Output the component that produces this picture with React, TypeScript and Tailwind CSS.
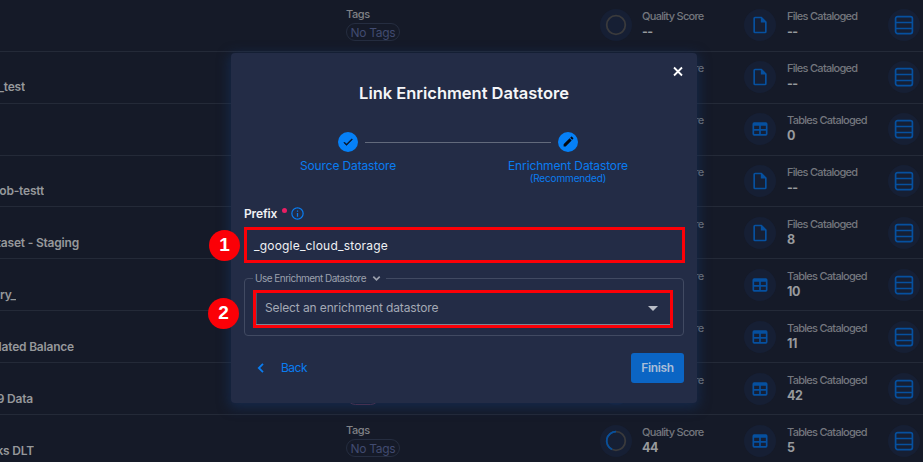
import React from "react";

type Kind = "file" | "table";
type Row = { name: string; nameWidth: string; kind: Kind; value: string; score: string; tag: "none" | "red"; box: string };

const rows: Row[] = [
  { name: "", nameWidth: "w-0", kind: "file", value: "--", score: "--", tag: "none", box: "h-[52px]" },
  { name: "_test", nameWidth: "w-[25px]", kind: "file", value: "--", score: "--", tag: "none", box: "h-[52px]" },
  { name: "", nameWidth: "w-0", kind: "table", value: "0", score: "--", tag: "none", box: "h-[52px]" },
  { name: "ob-testt", nameWidth: "w-[44px]", kind: "file", value: "--", score: "--", tag: "none", box: "h-[51px]" },
  { name: "taset - Staging", nameWidth: "w-[79px]", kind: "file", value: "8", score: "--", tag: "none", box: "h-[52px] pt-px" },
  { name: "ry_", nameWidth: "w-[16px]", kind: "table", value: "10", score: "--", tag: "none", box: "h-[52px] pt-px" },
  { name: "lated Balance", nameWidth: "w-[74px]", kind: "table", value: "11", score: "--", tag: "none", box: "h-[52px] pt-px" },
  { name: "9 Data", nameWidth: "w-[33px]", kind: "table", value: "42", score: "--", tag: "red", box: "h-[52px] pt-px" },
  { name: "ks DLT", nameWidth: "w-[34px]", kind: "table", value: "5", score: "44", tag: "none", box: "h-[52px] pt-px" },
];

const filePath =
  "M14,2H6A2,2 0 0,0 4,4V20A2,2 0 0,0 6,22H18A2,2 0 0,0 20,20V8L14,2M18,20H6V4H13V9H18V20Z";
const tablePath =
  "M5,4H19A2,2 0 0,1 21,6V18A2,2 0 0,1 19,20H5A2,2 0 0,1 3,18V6A2,2 0 0,1 5,4M5,8V12H11V8H5M13,8V12H19V8H13M5,14V18H11V14H5M13,14V18H19V14H13Z";

function Disc({ children }: { children: React.ReactNode }) {
  return (
    <div className="flex size-[32px] shrink-0 items-center justify-center rounded-full bg-[#161f34]">{children}</div>
  );
}

function Stat({ label, value, tracking }: { label: string; value: string; tracking: string }) {
  return (
    <div className="flex flex-col whitespace-nowrap">
      <span className={`h-[15px] text-[11px] leading-[15px] font-medium text-[#74777e] ${tracking}`}>{label}</span>
      <span
        className={`h-[16px] text-[12.5px] leading-[16px] font-bold text-[#989a9e] ${
          value === "--" ? "tracking-[-0.6px]" : "tracking-[-0.5px]"
        }`}
      >
        {value}
      </span>
    </div>
  );
}

function ScoreRing({ score }: { score: string }) {
  return (
    <svg width="22" height="22" viewBox="0 0 22 22" fill="none" strokeWidth="1.8">
      <circle cx="11" cy="11" r="9.3" stroke="#3a3a3c" />
      {score !== "--" && <path d="M11 1.7A9.3 9.3 0 0 0 7 19.4" stroke="#06509f" />}
    </svg>
  );
}

function StoreRow({ row }: { row: Row }) {
  return (
    <div className={`flex shrink-0 border-b border-[#242a38] ${row.box}`}>
      <div className="w-[346px] shrink-0 pt-[27px]">
        {row.name && (
          <div
            className={`flex justify-end overflow-hidden text-[12px] leading-4 font-semibold tracking-[-0.2px] whitespace-nowrap text-[#96989b] ${row.nameWidth}`}
          >
            {row.name}
          </div>
        )}
      </div>
      <div className="w-[254px] shrink-0 pt-[7px]">
        {row.tag === "none" ? (
          <>
            <div className="h-4 text-[11px] leading-[15px] font-medium tracking-[-0.4px] text-[#808287]">Tags</div>
            <div className="flex h-[18px] w-[54px] items-center justify-center rounded-full border border-[#252d40] pt-px text-[12px] leading-4 tracking-[-0.3px] whitespace-nowrap text-[#414b70]">
              No Tags
            </div>
          </>
        ) : (
          <div className="mt-[15px] h-[19px] w-[34px] rounded-full border border-[#6b3348]" />
        )}
      </div>
      <div className="flex w-[144px] shrink-0 gap-[10px] pt-[9px]">
        <Disc>
          <ScoreRing score={row.score} />
        </Disc>
        <Stat label="Quality Score" value={row.score} tracking="tracking-[-0.7px]" />
      </div>
      <div className="flex w-[144px] shrink-0 gap-[11px] pt-[9px]">
        <Disc>
          <svg width="20" height="20" viewBox="0 0 24 24" fill="#06509f">
            <path d={row.kind === "file" ? filePath : tablePath} />
          </svg>
        </Disc>
        <Stat
          label={row.kind === "file" ? "Files Cataloged" : "Tables Cataloged"}
          value={row.value}
          tracking="tracking-[-0.72px]"
        />
      </div>
      <div className="pt-[9px]">
        <Disc>
          <svg width="20" height="20" viewBox="0 0 20 20" fill="none" stroke="#06509f" strokeWidth="1.7">
            <rect x="1.6" y="1.6" width="16.8" height="17" rx="2" />
            <path d="M1.6 7.5H18.4M1.6 13.5H18.4" />
          </svg>
        </Disc>
      </div>
    </div>
  );
}

function Step({ icon, label, note }: { icon: React.ReactNode; label: string; note?: string }) {
  return (
    <div className="flex w-[124px] shrink-0 flex-col items-center whitespace-nowrap text-[#0a7cf0]">
      <div className="flex size-5 items-center justify-center rounded-full bg-[#0580f7]">{icon}</div>
      <div className="mt-[6px] h-4 text-[12px] leading-4 tracking-[-0.13px]">{label}</div>
      {note && <div className="-mt-1 text-[10px] leading-4 tracking-[-0.15px]">{note}</div>}
    </div>
  );
}

function Dialog() {
  return (
    <div className="absolute top-[53px] left-[231px] flex h-[350px] w-[466px] flex-col rounded bg-[#232c46] px-[13px] shadow-[0_3px_12px_2px_rgba(22,50,95,0.6)]">
      <div className="flex h-[24px] items-end justify-end pr-px">
        <svg width="10" height="11" viewBox="0 0 10 11" stroke="#fff" strokeWidth="1.8">
          <path d="M1 1.5L9 9.5M9 1.5L1 9.5" />
        </svg>
      </div>
      <h1 className="mt-[4px] text-center text-[16.5px] leading-6 font-semibold tracking-[-0.02px] text-[#f5f6f8]">
        Link Enrichment Datastore
      </h1>

      <div className="mt-[27px] mr-[12px] flex h-[61px] items-start justify-center">
        <Step
          label="Source Datastore"
          icon={
            <svg className="mb-px" width="12" height="12" viewBox="0 0 24 24" fill="#0b1222" stroke="#0b1222" strokeWidth="0.8">
              <path d="M21,7L9,19L3.5,13.5L4.91,12.09L9,16.17L19.59,5.59L21,7Z" />
            </svg>
          }
        />
        <div className="-mx-[45px] mt-[10px] h-px w-[186px] shrink-0 bg-[#626a7c]" />
        <Step
          label="Enrichment Datastore"
          note="(Recommended)"
          icon={
            <svg className="mb-px" width="13" height="13" viewBox="0 0 24 24" fill="#05080f">
              <path d="M20.71,7.04C21.1,6.65 21.1,6 20.71,5.63L18.37,3.29C18,2.9 17.35,2.9 16.96,3.29L15.12,5.12L18.87,8.87M3,17.25V21H6.75L17.81,9.93L14.06,6.18L3,17.25Z" />
            </svg>
          }
        />
      </div>

      <div className="mt-[12px] flex h-[16px] items-center">
        <span className="pt-px text-[12px] font-semibold tracking-[-0.15px] text-[#f0f1f4]">Prefix</span>
        <span className="mb-[5px] ml-[5px] size-[5px] rounded-full bg-[#e91e63]" />
        <svg className="ml-[3px]" width="15" height="15" viewBox="0 0 24 24" fill="#0a7cf0">
          <path d="M11,9H13V7H11M12,20C7.59,20 4,16.41 4,12C4,7.59 7.59,4 12,4C16.41,4 20,7.59 20,12C20,16.41 16.41,20 12,20M12,2A10,10 0 0,0 2,12A10,10 0 0,0 12,22A10,10 0 0,0 22,12A10,10 0 0,0 12,2M11,17H13V11H11V17Z" />
        </svg>
      </div>

      <div className="mt-[6px] flex h-[36px] w-[441px] shrink-0 items-center border-3 border-[#fb0007] pt-px pl-[7px] text-[12px] tracking-[0.2px] text-[#f0f1f4]">
        _google_cloud_storage
      </div>

      <fieldset className="mt-[8px] h-[65px] w-[440px] shrink-0 rounded border border-[#414a62] px-[8px]">
        <legend className="flex h-[14px] items-center gap-[5px] pt-px pr-[4px] pl-[2px] text-[10px] tracking-[-0.52px] whitespace-nowrap text-[#9ca1ae]">
          Use Enrichment Datastore
          <svg width="11" height="11" viewBox="0 0 12 12" fill="none" stroke="#9ca1ae" strokeWidth="1.8">
            <path d="M2.5 4L6 7.5L9.5 4" />
          </svg>
        </legend>
        <div className="mt-[5px] flex h-[38px] w-[420px] items-center justify-between border-3 border-[#fb0007] pr-[12px] pb-[2px] pl-[9px] text-[12px] tracking-[-0.12px] text-[#a4a9b5] shadow-[inset_0_-1px_0_#7d8494,inset_1px_0_0_#4a536b]">
          Select an enrichment datastore
          <svg width="10" height="5" viewBox="0 0 10 5" fill="#b9bdc7">
            <path d="M0 0H10L5 5Z" />
          </svg>
        </div>
      </fieldset>

      <div className="mt-[17px] flex h-[30px] items-center">
        <svg className="ml-[12px]" width="10" height="12" viewBox="0 0 10 12" fill="none" stroke="#0a7cf0" strokeWidth="1.8">
          <path d="M7 1.8L2.8 6L7 10.2" />
        </svg>
        <span className="ml-[15px] text-[12px] tracking-[-0.5px] text-[#0a7cf0]">Back</span>
        <button className="ml-auto h-[30px] w-[53px] rounded-[3px] bg-[#0b65c4] text-[12px] font-semibold tracking-[-0.35px] text-[#a9bdd8]">
          Finish
        </button>
      </div>
    </div>
  );
}

export default function App() {
  return (
    <div className="relative h-[462px] w-[923px] overflow-hidden bg-[#151a28] font-['Inter','Liberation_Sans',sans-serif]">
      <div className="flex flex-col">
        {rows.map((row, i) => (
          <StoreRow key={i} row={row} />
        ))}
      </div>
      <Dialog />
      <div className="absolute top-[230px] left-[209px] flex size-[31px] items-center justify-center rounded-full bg-[#fb0007] pb-px font-['Liberation_Sans',sans-serif] text-[19px] font-bold text-white">
        1
      </div>
      <div className="absolute top-[298px] left-[208px] flex size-[31px] items-center justify-center rounded-full bg-[#fb0007] pb-px font-['Liberation_Sans',sans-serif] text-[19px] font-bold text-white">
        2
      </div>
    </div>
  );
}
